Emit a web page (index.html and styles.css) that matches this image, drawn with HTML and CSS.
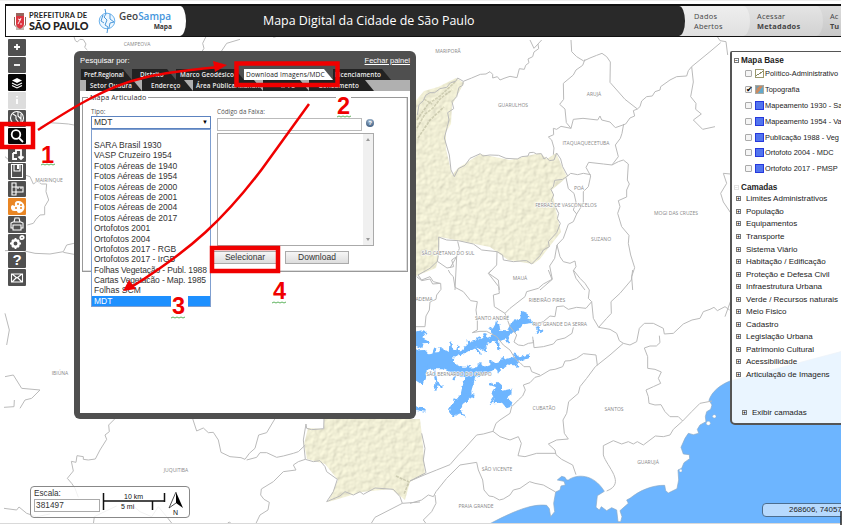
FILE: index.html
```html
<!DOCTYPE html>
<html lang="pt-BR">
<head>
<meta charset="utf-8">
<title>GeoSampa Mapa</title>
<link rel="stylesheet" href="styles.css">
</head>
<body>
<div class="app">
<svg class="map" width="841" height="524" viewBox="0 0 841 524">
<defs>
<filter id="relief" x="0" y="0" width="100%" height="100%">
<feTurbulence type="fractalNoise" baseFrequency=".17" numOctaves="2" seed="8" result="n"/>
<feDiffuseLighting in="n" surfaceScale=".8" diffuseConstant="1.16" lighting-color="#efedd4" result="l"><feDistantLight azimuth="225" elevation="60"/></feDiffuseLighting>
<feComposite in="l" in2="SourceGraphic" operator="in"/>
</filter>
<filter id="inlets" filterUnits="userSpaceOnUse" x="400" y="290" width="150" height="140" color-interpolation-filters="sRGB">
<feTurbulence type="fractalNoise" baseFrequency=".25" numOctaves="2" seed="5"/>
<feDisplacementMap in="SourceGraphic" scale="4" xChannelSelector="R" yChannelSelector="G"/>
</filter>
</defs>
<!-- municipality of São Paulo -->
<g class="land" filter="url(#relief)">
<path d="M410 118L413 104 424 91 438 87 456 78 464 83 452 105 451 124 446 132 446 149 452 175 458 168 480 154 510 160 540 153 547 159 556 153 567 177 552 190 557 215 561 232 553 242 540 259 533 264 508 260 490 247 440 237 438 260 436 268 416 276 410 275Z"/>
<path d="M324 419L420 419 423 445 425 474 410 482 405 500 391 489 362 492 328 502 338 480 325 464 307 459 304 444 308 428 324 429Z"/>
</g>
<path class="ridges" d="M417 128L425 114 433 108 441 98 452 90M417 120L428 104 440 96 455 82M418 138L430 120 444 107M424 99L432 104M396 476L409 482 404 494"/>
<!-- reservoirs -->
<g filter="url(#inlets)"><g transform="translate(410 270) scale(.33333)">
<path class="lake" d="M0 242L45 240 54 250 85 246 100 236 117 246 120 222 132 242 153 244 185 211 206 208 242 198 249 175 260 155 269 164 270 182 290 184 304 158 332 145 336 122 352 129 355 145 373 158 340 163 325 181 304 190 290 207 266 213 264 237 256 213 222 224 224 240 196 232 164 250 130 262 128 278 158 293 200 292 212 280 220 290 264 274 314 260 320 245 327 262 359 252 356 264 325 275 312 290 302 279 280 296 250 300 227 313 195 325 184 363 186 382 158 402 152 418 168 440 146 430 130 441 117 421 130 400 153 371 163 325 140 315 100 298 70 298 50 304 38 345 0 320Z"/>
<path class="lake" d="M0 190L38 180 50 185 37 205 64 218 38 220 34 235 0 220ZM240 334L253 345 264 335 276 346 276 362 305 356 304 376 290 385 307 397 303 410 290 415 276 398 248 400 254 385 246 370 258 352ZM0 403L47 416 46 425 0 417Z"/>
<g class="reservoir-arms"><path d="M60 268L45 290M70 250L76 234M95 250L91 232M120 245L122 218M140 248L146 228M160 247L168 230M180 230L176 210M200 222L207 200M230 210L222 190M250 195L240 172M258 195L260 155M285 196L296 216M300 175L318 185M318 170L315 148M335 150L336 126M170 300L177 285M192 300L195 318M208 300L206 280M230 295L235 312M245 290L244 270M260 286L267 306M285 280L278 262M305 278L327 290M316 265L312 248M170 345L193 340M160 370L190 378M150 395L130 388M275 380L303 366M258 372L240 400M265 350L240 342M72 300L80 340 97 350M80 335L76 362M130 330L142 308M195 232L210 252M225 222L228 248M264 215L266 238M368 160L388 176 380 192M388 176L397 188"/></g>
</g></g>
<!-- coast -->
<g transform="translate(410 270) scale(.33333)">
<path class="water" d="M236 763C300 730 360 700 410 706L418 716 422 740 434 725 431 700 437 666 450 660 453 648 466 645 462 634 442 630 455 619 465 622 470 630 475 630C500 612 550 610 583 664L562 677 558 712 568 720 574 710 590 722 605 713 620 720 624 755 632 755 636 740 630 722 655 700 650 690 660 685C690 660 730 645 764 646L767 662 775 669 801 656 806 630 804 600 815 595 822 578 839 566 838 554 820 552 813 532 825 505 835 490 850 494 866 490 862 478 870 465 888 455 886 440 890 425 902 418 906 405 897 391C905 365 930 345 960 333L1310 240V790H236Z"/>
<g class="isles"><circle cx="895" cy="460" r="6"/><circle cx="913" cy="439" r="5"/><circle cx="812" cy="602" r="4"/></g>
</g>
<!-- municipal limits -->
<g class="limits" transform="translate(410 40) scale(.33333)">
<path d="M360 0L372 25 395 0M384 12L386 26 372 36 368 50 354 57 357 68 347 76 343 88 328 86 321 113 300 109 285 114 270 120 262 110 248 114 248 103 240 95 228 102 211 103 185 114 160 124 143 114 137 124 122 128 110 142 90 146 74 158 60 158 47 166 40 182 27 194 22 225M160 124L158 136 147 142 140 170 126 185 131 206 113 218 117 240 112 260 103 294 118 345 123 390 133 410 145 386 165 376 180 355 211 341 218 348 240 345 266 346 288 355 322 357 335 350 354 348 358 338 370 337 380 342 394 341 402 357 409 352 418 362 432 360 440 339 452 357 458 380 473 408 458 418 434 421 430 440 423 448 431 465 424 482 436 500 446 520 442 536 451 550 440 578 415 605 418 620 400 630 390 647 365 672 350 662 342 662 310 665 280 660 278 645 261 635 215 630 190 612 145 602 110 600 86 591 86 640 82 664 60 685 24 705"/>
<path d="M483 0L485 35 500 50 521 63 540 54 560 46 576 40 590 50 601 66 600 127 645 178 682 207 670 212 674 228 660 234 647 252 616 263 600 246 575 240 570 228 563 240 519 235 490 238 483 265 469 248 465 207 449 193 461 178 460 130 490 105 498 90 518 76 525 58M483 265L453 259 440 268 430 265 431 284 415 291 425 300 432 324 430 344M682 207L690 200 695 183 710 170 727 168 735 155 750 150 752 140 780 120 800 110 830 108 835 92 845 80 900 35 932 8M845 80L850 126 842 170 858 190 857 208 874 222 850 240 878 268 915 260M641 252L636 280 631 295 616 315 625 350 606 375 580 372 536 367 528 382 542 408 535 440 520 455 520 490 500 522 490 545 475 553 460 595 441 615 434 655 419 678 427 718 390 750M473 408L482 400 503 404 520 400 542 404M468 413L475 446 492 460 498 486 490 510 500 522M606 375L625 365 640 360 655 372 652 420 658 432 650 450 650 471 625 482 630 500 623 520 635 560 657 586 655 610 662 645 674 683 665 710 668 750M441 615L450 650 460 665 480 670 495 663 498 680 490 692 498 715 525 750M82 664L111 684 131 680 125 660 140 650 135 750M143 604L148 625 140 650 120 684M261 635L260 675 236 700 265 720 268 750M24 705L35 720 60 710 70 725 90 730"/>
</g>
<g class="limits" transform="translate(410 270) scale(.33333)">
<path d="M20 20L35 32 60 27 68 42 92 40 93 58 80 75 78 88 60 96 58 120 48 138 45 170 18 170M115 0L120 10 130 20 135 52 160 65 182 92 202 95 198 120 202 150 202 180 187 188 210 184 230 184 260 200 280 225 300 240 315 265 330 278 342 290 360 290 365 305 390 315M245 0L235 10 266 50 268 70 250 75 253 110 285 130 300 115 345 80 350 65 385 55 400 42 426 28 415 0M285 130L300 170 320 195 312 216 325 225 340 227 355 220 370 218 368 200M380 162L400 155 420 138 435 140 440 110 460 108 475 118 500 112 528 115 545 95 550 145 566 172 600 178 620 190 628 212 640 220 600 255 556 290 530 325 510 350 505 370 476 395 470 430 459 450 463 490 475 507 440 510 415 522 435 540 438 554 455 568 488 585 498 614M490 0L510 25 525 40 538 60 535 85 545 95M668 0L664 30 630 70 603 95 604 130 590 145 566 172M640 220L660 225 680 215 688 175 703 160 730 160 760 175 763 192 790 190 820 162 846 150 870 145 880 125 900 118 912 112 922 122 945 110 959 120M748 197L750 218 739 228 720 228 703 234 713 260 713 295 735 298 754 306 745 325 752 340 730 350 708 360 715 380 717 400 735 405 753 404 765 425 780 440 805 440 818 453 845 425 870 400 906 393M818 453L790 478 780 495 760 500 736 498 700 525 682 515 670 522 655 515 635 522 610 512 580 527 580 555C590 590 650 640 590 663M370 210L372 233 400 230 430 222 440 210 465 204 486 190 490 172M390 318L420 300 435 298 458 290 465 273 480 272 500 265 520 251 558 255 562 286M390 318L375 322 360 338 340 345 346 360 338 378 325 390 305 410 300 430 270 450 258 460 249 484 270 500 300 510 325 500 334 520 324 557 345 560 380 550 438 550M249 484L220 492 200 495 160 540 145 555 120 584 80 600 45 614 0 633M0 700L35 690 55 675 70 680 78 665 110 625 150 585 200 577 205 600 218 630 222 660 237 678 250 680 268 690 280 687 300 675 310 660 330 655 359 635 375 640 400 645 437 666M75 675L78 700 65 725 40 750 50 763M35 490L45 535 40 570 48 608 0 633"/>
</g>
<g class="limits" transform="translate(0 400) scale(.33333)">
<path d="M345 56L326 75 328 95 315 105 320 118 300 150 286 177 265 180 250 178 250 170 231 167 228 187 214 184 220 213 202 235 215 250 225 265 235 292M578 56L590 93 610 84 625 98 640 97 655 120 663 157 690 170 723 173 735 178 748 160 765 145 776 105 800 98 825 56M740 180L770 172 780 158 800 158 830 172 850 168 880 160 895 155 916 135M918 72L920 85 935 89 971 86 972 56M918 72L910 120 916 178 895 185 880 195 888 210 850 215 820 245 784 267 782 285 792 298 808 307 804 330 780 345 768 370M916 178L940 185 960 182 975 200 980 215 1012 238 1000 275 980 305 1020 288 1035 275 1060 285 1080 275 1090 283 1125 264 1180 268 1200 290 1207 310 1260 306M1207 310L1125 352 1112 373M12 325L50 330 57 321 80 340 110 350 150 342M280 373L283 350 320 332 350 318M400 318L420 335 455 350 475 320 500 350 518 373M680 373Q688 360 695 373M12 22L42 20 43 0"/>
</g>
<g class="limits" transform="scale(.33333)">
<path d="M222 110L226 122 232 126 240 118 250 119 258 132 254 142 262 150M605 156L612 145 608 130 618 110M120 382L145 368 180 370 205 372 222 375M15 470L50 500 75 525 90 530 100 552 112 544 125 552 140 552 138 575 146 600 134 620 134 644 120 645 108 658 100 670 82 675M15 752L60 750 105 760 150 762 190 755 200 735 222 730M190 757L222 763M660 160L680 130 720 118M820 112L835 108 850 95M15 940L28 990 20 1035M15 1130L40 1125 65 1165 120 1170 95 1195 75 1200 60 1225"/>
</g>
<g class="limits" transform="translate(630 0) scale(.33333)"><path d="M262 110L270 122 288 125 293 165M301 522L280 520 290 550 272 580 280 606 303 640M303 900L285 950"/></g>
<g class="labels" text-anchor="middle">
<text x="137" y="46">CAMPEOVA</text><text x="49" y="182">MAIRINQUE</text><text x="448" y="53">MARIPORÃ</text><text x="513" y="107">GUARULHOS</text><text x="594" y="96">ARUJÁ</text><text x="586" y="145">ITAQUAQUECETUBA</text><text x="579" y="190">POÁ</text><text x="566" y="207">FERRAZ DE VASCONCELOS</text><text x="601" y="241">SUZANO</text><text x="676" y="215">MOGI DAS CRUZES</text><text x="448" y="255">SÃO CAETANO DO SUL</text><text x="520" y="280">MAUÁ</text><text x="424" y="301">ADEMA</text><text x="547" y="302">RIBEIRÃO PIRES</text><text x="492" y="320">SANTO ANDRÉ</text><text x="560" y="326">RIO GRANDE DA SERRA</text><text x="459" y="376">SÃO BERNARDO DO CAMPO</text><text x="544" y="410">CUBATÃO</text><text x="614" y="411">SANTOS</text><text x="648" y="464">GUARUJÁ</text><text x="497" y="471">SÃO VICENTE</text><text x="476" y="508">PRAIA GRANDE</text><text x="176" y="472">JUQUITIBA</text><text x="60" y="375">IBIÚNA</text>
</g>
</svg>

<header class="header">
<div class="brand">
<svg class="crest" viewBox="0 0 14 18"><path d="M3 1h8v3H3z" fill="#9b6660"/><path d="M3 4h8v8q0 3-4 5-4-2-4-5z" fill="#dc3540"/><path d="M1.500 5v8l3 3M12.500 5v8l-3 3M3 17h8M5 2v2M7 1v3M9 2v2" stroke="#8a6a5c" fill="none"/><path d="M5 12l3-6M5 7l3 1M7 12h2" stroke="#fff" stroke-width=".9" fill="none"/></svg>
<div class="city"><span>PREFEITURA DE</span><strong>SÃO PAULO</strong></div>
<svg class="globe" viewBox="0 0 18 24"><circle cx="9" cy="12" r="7.800" fill="#eef7ff" stroke="#6cb2ec"/><path d="M7 0l1 5-2 3 3 3-2 5 3 2-1 6M5 6L3 12l3 2M12 5v5l4 3-4 1-1 5" stroke="#4c99da" fill="none"/></svg>
<div class="product"><span>Geo<em>Sampa</em></span><b>Mapa</b></div>
</div>
<h1>Mapa Digital da Cidade de São Paulo</h1>
<nav class="links"><a class="l1">Dados<br>Abertos</a><a class="l2">Acessar<br><b>Metadados</b></a><a class="l3">Ac<br><b>Tu</b></a></nav>
</header>

<aside class="tools">
<div class="tool"><svg viewBox="0 0 16 16"><path class="s2" d="M8 5v6M5 8h6"/></svg></div>
<div class="tool"><svg viewBox="0 0 16 16"><path class="s2" d="M5 8h6"/></svg></div>
<div class="tool dark"><svg viewBox="0 0 16 16"><path class="f" d="M8 3l5 2.400L8 8 3 5.400z"/><path class="s" d="M3 8l5 2.400L13 8M3 10.500L8 13l5-2.500"/></svg></div>
<div class="tool off"><svg viewBox="0 0 16 16"><path class="s2" d="M8 7v5M8 4v1.500"/></svg></div>
<div class="tool"><svg viewBox="0 0 16 16"><circle class="s" cx="8" cy="8" r="6.500"/><path class="s" d="M4 4l3 2v3l3 4M9 2v4l3 3M12 4v8"/></svg></div>
<div class="tool dark"><svg viewBox="0 0 16 16"><circle class="s2" cx="7" cy="6.500" r="4.300"/><path class="s2" d="M10 10l4 4"/></svg></div>
<div class="tool"><svg viewBox="0 0 16 16"><path class="s2" d="M4 7h3V4h5v9M9.500 10.500L12 13l2.500-2.500M4 7v6h4"/></svg></div>
<div class="tool"><svg viewBox="0 0 16 16"><path class="s" d="M2.500 1.500h11v13h-11zM5 2v6h6V2"/><path class="f" d="M8 2h2v4H8z"/></svg></div>
<div class="tool"><svg viewBox="0 0 16 16"><path class="s" d="M3 2h4v12H3zM3 6h11v5H3M9 6v2M12 6v2"/></svg></div>
<div class="tool orange"><svg viewBox="0 0 16 16"><path class="f" d="M9 2a6 6 0 0 1 1 12q-2 0-2-2H5a3.500 3.500 0 0 1-2-6l3 1q-1-5 3-5z"/><g fill="#e98624"><circle cx="9" cy="5" r="1"/><circle cx="12" cy="6" r="1"/><circle cx="12" cy="9" r="1"/><circle cx="7" cy="9" r="1"/></g></svg></div>
<div class="tool"><svg viewBox="0 0 16 16"><path class="s" d="M5 6l1-4h4l1 4M4 12H2V7l2-1h8l2 1v5h-2M4 9h8v5H4z"/></svg></div>
<div class="tool"><svg viewBox="0 0 16 16"><circle cx="6.500" cy="9.500" r="3.200" stroke="#fff" stroke-width="2.500" fill="none"/><path class="s2" d="M6.500 4v2M6.500 13v2M1 9.500h2M10 9.500h2M3 6l1 1M9 12l1 1M3 13l1-1M10 6L9 7"/><circle class="s2" cx="13" cy="3.500" r="1.700"/></svg></div>
<div class="tool help">?</div>
<div class="tool"><svg viewBox="0 0 16 16"><path class="s" d="M2.500 4h11v8h-11zM3 4l5 4 5-4M3 12l4-4M13 12L9 8"/></svg></div>
</aside>

<section class="panel">
<div class="panel-head"><span>Pesquisar por:</span><a>Fechar painel</a></div>
<div class="tabs row1"><span class="t1">Pref.Regional</span><span class="t2">Distrito</span><span class="t3">Marco Geodésico</span><span class="t4 active">Download Imagens/MDC</span><span class="t5">Licenciamento</span></div>
<div class="tabs row2"><span class="u1">Setor Quadra</span><span class="u2">Endereço</span><span class="u3">Área Pública/Manan.</span><span class="u4">IPTU</span><span class="u5">Zoneamento</span></div>
<div class="panel-body">
<fieldset class="group"><legend>Mapa Articulado</legend>
<div class="cols">
<div class="left"><label>Tipo:</label><div class="select"><span>MDT</span><i>▼</i>
<ul class="options"><li>SARA Brasil 1930</li><li>VASP Cruzeiro 1954</li><li>Fotos Aéreas de 1940</li><li>Fotos Aéreas de 1954</li><li>Fotos Aéreas de 2000</li><li>Fotos Aéreas de 2001</li><li>Fotos Aéreas de 2004</li><li>Fotos Aéreas de 2017</li><li>Ortofotos 2001</li><li>Ortofotos 2004</li><li>Ortofotos 2017 - RGB</li><li>Ortofotos 2017 - IrGB</li><li class="tight">Folhas Vegetação - Publ. 1988</li><li class="tight">Cartas Vegetacão - Map. 1985</li><li>Folhas SCM</li><li class="on">MDT</li></ul></div></div>
<div class="right"><label>Código da Faixa:</label>
<div class="code"><div class="input"></div><span class="info">?</span></div>
<div class="list"><div class="scroll"><i class="up"></i><i class="down"></i></div></div>
<div class="actions"><div class="btn">Selecionar</div><div class="btn">Download</div></div></div>
</div></fieldset>
</div>
</section>

<aside class="layers">
<h2><i class="box">−</i>Mapa Base</h2>
<ul class="base"><li><i class="chk"></i><i class="thumb line"></i>Político-Administrativo</li><li><i class="chk on">✔</i><i class="thumb topo"></i>Topografia</li><li><i class="chk"></i><i class="thumb"></i>Mapeamento 1930 - Sa</li><li><i class="chk"></i><i class="thumb"></i>Mapeamento 1954 - Va</li><li><i class="chk"></i><i class="thumb"></i>Publicação 1988 - Veg</li><li><i class="chk"></i><i class="thumb"></i>Ortofoto 2004 - MDC</li><li><i class="chk"></i><i class="thumb"></i>Ortofoto 2017 - PMSP</li></ul>
<h2 class="second"><i class="box faint">−</i>Camadas</h2>
<ul class="tree"><li><i class="box">+</i>Limites Administrativos</li><li><i class="box">+</i>População</li><li><i class="box">+</i>Equipamentos</li><li><i class="box">+</i>Transporte</li><li><i class="box">+</i>Sistema Viário</li><li><i class="box">+</i>Habitação / Edificação</li><li><i class="box">+</i>Proteção e Defesa Civil</li><li><i class="box">+</i>Infraestrutura Urbana</li><li><i class="box">+</i>Verde / Recursos naturais</li><li><i class="box">+</i>Meio Fisico</li><li><i class="box">+</i>Cadastro</li><li><i class="box">+</i>Legislação Urbana</li><li><i class="box">+</i>Patrimonio Cultural</li><li><i class="box">+</i>Acessibilidade</li><li><i class="box">+</i>Articulação de Imagens</li></ul>
<div class="show"><i class="box">+</i>Exibir camadas</div>
</aside>

<div class="scale"><div class="ratio"><span>Escala:</span><div>381497</div></div>
<svg width="86" height="28" viewBox="0 0 86 28"><path d="M3.500 5v17M3.500 13h61M64.500 5v9M52.500 13v9" stroke="#111" stroke-width="1.500" fill="none"/><text x="24" y="11">10 km</text><text x="21" y="21">5 mi</text><path d="M76 4l7 16-7-5z" fill="#000"/><path d="M76 4l-7 16 7-5" fill="none" stroke="#222" stroke-width=".8"/><text x="73" y="27">N</text></svg></div>
<div class="coords">268606, 74057</div>
</div>

<svg class="notes" width="846" height="527" viewBox="0 0 846 527">
<path d="M336 96h15v14h-15zM171 295h17v13h-17z" fill="#fff"/>
<g class="frames"><rect x="2" y="124" width="31" height="23"/><rect x="236.500" y="63.500" width="101" height="21.500"/><rect x="212" y="248" width="66" height="23"/></g>
<path class="arrow" d="M38 130C75 106 108 86 143 78C170 71 195 70 217 67M309 104L262 169C225 218 192 249 133 286"/>
<path d="M227 65L213 61 215 72zM123 291L129 280 136 289z" fill="#f00000"/>
<path d="M841 511v14" stroke="#222" stroke-width="1.500"/>
<g class="nums"><text x="41" y="163">1</text><text x="337" y="114">2</text><text x="172" y="314">3</text><text x="273" y="299">4</text></g>
<path class="wave" d="M41 165l2-1 2 1 2-1 2 1 2-1 2 1 2-1M337 117l2-1 2 1 2-1 2 1 2-1 2 1 2-1M171 318l2-1 2 1 2-1 2 1 2-1 2 1 2-1M272 303l2-1 2 1 2-1 2 1 2-1 2 1 2-1"/>
</svg>
</body>
</html>
```
FILE: styles.css
```css
* { box-sizing: border-box; }
body { margin: 0; width: 846px; height: 527px; overflow: hidden; background: #fff; position: relative; font: 8.5px "Liberation Sans", sans-serif; color: #333; }
i, em { font-style: normal; }
ul { list-style: none; margin: 0; padding: 0; }
.app { position: relative; width: 841px; height: 524px; overflow: hidden; border-bottom: 1px solid #d9d9d9; border-top: 1px solid #eee; }
.map { position: absolute; left: 0; top: -1px; }
.land { fill: #eeedd0; }
.ridges { fill: none; stroke: #8f8e70; stroke-width: 1.6; opacity: .35; stroke-dasharray: 3 1; }
.lake { fill: #6db5ff; }
.water { fill: #6db5ff; stroke: #8aa9c5; stroke-width: 2; }
.reservoir-arms { fill: none; stroke: #6db5ff; stroke-width: 7; }
.isles { fill: #fff; stroke: #aaa; }
.limits { fill: none; stroke: #bababa; stroke-width: 3; stroke-linejoin: round; }
.labels { font: 5px "Open Sans", sans-serif; fill: #888; stroke: #fff; stroke-width: 1px; paint-order: stroke; }

.header { position: absolute; left: 5px; top: 3px; width: 836px; height: 33px; border: 1px solid #111; border-width: 2px 0 1px 1px; background: #292929; display: flex; }
.brand { width: 180px; background: #fff; border-radius: 0 6px 6px 0 / 0 15px 15px 0; display: flex; align-items: center; flex: none; padding-left: 7px; }
.crest { width: 14px; height: 18px; }
.city { margin-left: 2px; width: 61px; font-family: Lato, sans-serif; color: #222; display: flex; flex-direction: column; white-space: nowrap; }
.city span { font-size: 7.5px; line-height: 9px; font-weight: 700; letter-spacing: .15px; }
.city strong { font-size: 10.8px; line-height: 11px; font-weight: 900; letter-spacing: -.1px; }
.globe { width: 18px; height: 24px; margin-left: 8px; }
.product { margin: -1px 0 0 3px; width: 55px; display: flex; flex-direction: column; font-family: "Open Sans", sans-serif; }
.product span { font-size: 10px; line-height: 12px; color: #444; font-weight: 600; }
.product em { color: #4495dc; }
.product b { font-size: 6.6px; line-height: 9px; text-align: right; padding-right: 2px; }
h1 { margin: 0; padding: 0 0 1px 77px; width: 493px; color: #fff; font: 400 12.45px/30px "Open Sans", sans-serif; white-space: nowrap; flex: none; }
.links { width: 162px; background: linear-gradient(#dcdcdc, #c8c8c8); display: flex; position: relative; font: 7.4px/10px "Open Sans", sans-serif; color: #444; letter-spacing: .25px; }
.links::before { content: ""; position: absolute; left: -6px; width: 12px; height: 30px; background: #292929; border-radius: 0 6px 6px 0 / 0 15px 15px 0; z-index: 2; }
.links a { padding-top: 5px; flex: none; position: relative; }
.l1 { width: 71px; padding-left: 15px; border-radius: 0 7px 7px 0 / 0 15px 15px 0; background: linear-gradient(#eee, #e0e0e0); z-index: 1; }
.l2 { width: 80px; margin-left: -7px; padding-left: 14px; border-radius: 0 7px 7px 0 / 0 15px 15px 0; background: linear-gradient(#e4e4e4, #d2d2d2); }
.l3 { width: 18px; padding-left: 7px; letter-spacing: 0; }

.tools { position: absolute; left: 8px; top: 38px; width: 18px; height: 247px; display: grid; grid-template-rows: repeat(14, 1fr); gap: 1px; }
.tool { background: #505050; display: flex; align-items: center; justify-content: center; border-radius: 1px; min-height: 0; }
.tool svg { width: 16px; height: 16px; fill: none; }
.tool .f { fill: #fff; }
.tool .s { stroke: #fff; stroke-width: 1.1; }
.tool .s2 { stroke: #fff; stroke-width: 1.8; }
.dark { background: #050505; }
.off { background: #ddd; }
.orange { background: #e98624; }
.help { font-size: 15px; font-weight: 700; color: #fff; line-height: 16px; }

.panel { position: absolute; left: 74px; top: 50px; width: 342px; height: 368px; background: #4f4f4f; border-radius: 6px; padding: 0 6px 6px; display: flex; flex-direction: column; }
.panel-head { height: 18px; display: flex; justify-content: space-between; align-items: center; color: #fff; font-size: 7.5px; }
.panel-head span { font-size: 7.7px; }
.panel-head a { text-decoration: underline; }
.tabs { display: flex; height: 11px; font: 600 6.3px/11px "Open Sans", sans-serif; color: #eee; letter-spacing: .12px; white-space: nowrap; }
.tabs span { background: #222; height: 11px; clip-path: polygon(0 0, calc(100% - 9px) 0, 100% 100%, 0 100%); flex: none; padding-left: 3px; }
.row1 { padding-left: 1px; }
.row2 { background: #b0b0b0; padding-left: 6px; }
.t1 { width: 51px; } .tabs .t1 { letter-spacing: -.05px; }
.t2 { width: 44px; } .tabs .t2 { padding-left: 8px; }
.t3 { width: 68px; } .tabs .t3 { padding-left: 4px; }
.t4 { width: 89px; }
.tabs .active { background: #fff; color: #222; font-size: 6.6px; font-weight: 400; letter-spacing: .12px; padding-left: 2px; }
.t5 { width: 58px; } .tabs .t5 { padding-left: 2px; }
.u1 { width: 56px; } .tabs .u1 { padding-left: 4px; }
.u2 { width: 51px; } .tabs .u2 { padding-left: 9px; }
.u3 { width: 70px; } .u4 { width: 46px; } .tabs .u4 { padding-left: 18px; }
.u5 { width: 65px; } .tabs .u5 { padding-left: 10px; }
.panel-body { background: #fff; flex: 1; padding: 0 2px; }
.group { margin: 0; border: 1px solid #999; height: 181px; padding: 0 0 0 8px; min-width: 0; box-shadow: inset -1px -1px 0 #ddd; }
legend { padding: 0 2px; margin-left: -3px; font: 7.2px/12px "Open Sans", sans-serif; letter-spacing: .1px; }
.cols { display: flex; gap: 6px; }
.left { width: 120px; padding-top: 4px; }
label { display: block; font: 6.3px/9px "Open Sans", sans-serif; color: #555; }
.select { position: relative; height: 13px; border: 1px solid #5c83c0; padding: 0 2px; display: flex; justify-content: space-between; line-height: 11px; }
.select i { font-size: 6px; color: #000; }
.options { position: absolute; left: -1px; top: 12px; width: 120px; height: 178px; background: #fff; border: 1px solid #7f9fd0; padding-top: 10px; line-height: 10.4px; letter-spacing: 0; white-space: nowrap; }
.options li { padding-left: 2px; height: 10.4px; }
.options .tight { letter-spacing: -.12px; }
.options .on { background: #1e90ff; color: #fff; }
.right { width: 165px; padding-top: 4px; }
.code { display: flex; align-items: center; gap: 4px; padding-top: 2px; }
.input { width: 145px; height: 13px; border: 1px solid #bbb; }
.info { width: 8px; height: 8px; border-radius: 50%; background: radial-gradient(circle at 50% 25%, #a8bfd6, #29486d); color: #fff; font: 700 6px/8px "Liberation Sans", sans-serif; text-align: center; margin-top: -3px; }
.list { width: 157px; height: 113px; border: 1px solid #aaa; margin-top: 2px; display: flex; justify-content: flex-end; }
.scroll { width: 10px; background: #f0f0f0; display: flex; flex-direction: column; justify-content: space-between; align-items: center; padding: 4px 0; }
.up, .down { border: 2px solid transparent; }
.up { border-top: 0; border-bottom: 3px solid #999; }
.down { border-bottom: 0; border-top: 3px solid #999; }
.actions { display: flex; gap: 8px; margin: 5px 0 0 -4px; }
.btn { width: 64px; height: 13px; border: 1px solid #aaa; background: linear-gradient(#f6f6f6, #ddd); text-align: center; line-height: 11px; }

.layers { position: absolute; left: 730px; top: 50px; width: 125px; height: 374px; border: 1.5px solid #555; border-bottom-width: 2px; border-left-width: 2px; border-radius: 2px 0 0 5px; background: rgba(255,255,255,.86); padding: 3px 0 0 2px; font-size: 8px; color: #222; white-space: nowrap; }
h2 { margin: 0; font-size: 8.2px; line-height: 11px; display: flex; align-items: center; }
.box { width: 5px; height: 5px; border: 1px solid #777; font: 700 5px/3px "Liberation Sans", sans-serif; display: inline-flex; align-items: center; justify-content: center; flex: none; margin-right: 3px; color: #000; }
h2 .box { margin-right: 2px; }
.faint { opacity: .2; }
.base li { height: 15.8px; display: flex; align-items: center; padding-left: 11px; font-size: 7.4px; }
.chk { width: 7px; height: 7px; border: 1px solid #aaa; background: #f5f5f5; border-radius: 1px; margin-right: 3px; font-size: 8px; line-height: 6px; flex: none; }
.chk.on { color: #000; }
.thumb { width: 9px; height: 9px; background: #5275ee; border: 1px solid #2638dc; margin-right: 1px; flex: none; }
.thumb.line { background: linear-gradient(150deg, #fff 45%, #8a8a62 46% 55%, #fff 56%); border-color: #99996e; }
.thumb.topo { background: linear-gradient(125deg, #7a99a8 25%, #c98b62 26% 55%, #62a9cc 60%); border-color: #a9a9a1; }
.second { margin-top: 5px; }
.tree li { height: 12.55px; display: flex; align-items: center; padding-left: 2px; }
.tree .box { margin-right: 5px; }
.show { display: flex; align-items: center; padding: 27px 0 0 8px; line-height: 10px; }
.show .box { margin-right: 5px; }

.scale { position: absolute; left: 30px; top: 485px; width: 160px; height: 32px; border: 1.5px solid #888; border-radius: 4px; background: rgba(255,255,255,.8); display: flex; padding: 1px 3px; }
.scale svg { flex: none; }
.ratio { width: 66px; line-height: 10px; padding-top: 1px; font-size: 8.2px; flex: none; }
.ratio div { border: 1px solid #aaa; height: 13px; padding-left: 1px; line-height: 11px; letter-spacing: .1px; }
.scale text { font: 7px "Liberation Sans", sans-serif; fill: #111; }
.coords { position: absolute; left: 762px; top: 502px; width: 90px; height: 14px; border: 1.5px solid #4c6e90; border-radius: 4px; background: #b7dafe; font-size: 7.9px; line-height: 12px; padding-left: 26px; color: #222; white-space: nowrap; }

.notes { position: absolute; left: 0; top: 0; }
.frames rect { fill: none; stroke: #f00000; stroke-width: 4.5; }
.arrow { fill: none; stroke: #f00000; stroke-width: 2.5; }
.nums { font: 700 23.5px "Liberation Sans", sans-serif; fill: #f00000; }
.wave { fill: none; stroke: #35a035; stroke-width: .8; }
```
